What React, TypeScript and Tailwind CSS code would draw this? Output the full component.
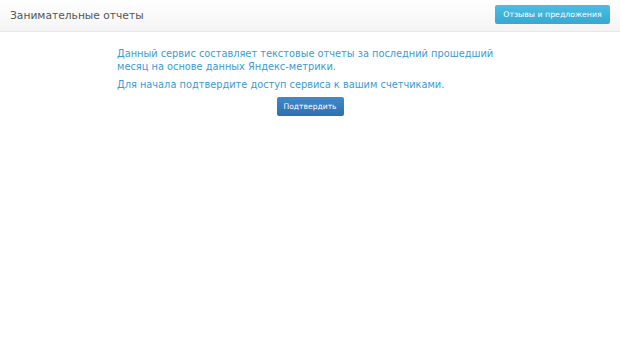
export default function App() {
  return (
    <div className="min-h-[343px] bg-white font-['DejaVu_Sans',sans-serif]">
      <header className="flex h-[32px] items-start justify-between border-b border-[#e8e8e8] bg-gradient-to-b from-white to-[#f4f4f4] pl-[10px] pr-[10px]">
        <h1 className="mt-[9px] text-[10.7px] leading-[14px] text-[#555]">Занимательные отчеты</h1>
        <button className="mt-[5px] h-[19px] w-[115px] rounded-[2px] bg-gradient-to-b from-[#4cbde3] to-[#34a9d4] text-[7.8px] text-white">
          Отзывы и предложения
        </button>
      </header>
      <main className="mx-auto flex w-[390px] flex-col pt-[15px] text-[9.8px] leading-[13px] text-[#3d9ad3]">
        <p className="pl-[2px]">Данный сервис составляет текстовые отчеты за последний прошедший месяц на основе данных Яндекс-метрики.</p>
        <p className="mt-[5px] pl-[2px]">Для начала подтвердите доступ сервиса к вашим счетчиками.</p>
        <button className="mx-auto mt-[6px] h-[19px] w-[67px] rounded-[2px] bg-gradient-to-b from-[#4289ca] to-[#2f6fb0] text-[7.6px] text-white">
          Подтвердить
        </button>
      </main>
    </div>
  )
}
